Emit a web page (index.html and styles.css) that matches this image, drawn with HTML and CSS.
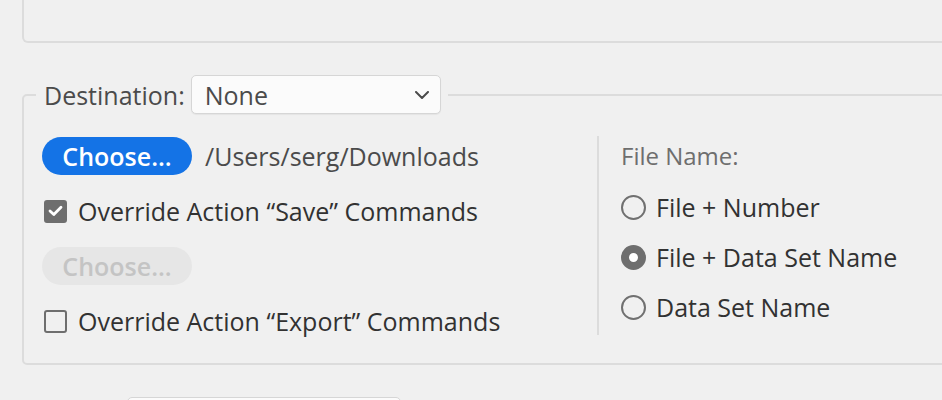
FILE: index.html
```html
<!DOCTYPE html>
<html>
<head>
<meta charset="utf-8">
<link rel="stylesheet" href="styles.css">
</head>
<body>
<div class="top-panel"></div>
<fieldset class="group">
  <legend class="legend">
    <span class="legend-label">Destination:</span>
    <span class="select">
      <span class="select-value">None</span>
      <svg class="chevron" width="14" height="8" viewBox="0 0 14 8"><path d="M1 1 L7 7 L13 1" fill="none" stroke="#4b4b4b" stroke-width="2" stroke-linecap="round" stroke-linejoin="round"/></svg>
    </span>
  </legend>
  <div class="columns">
    <div class="left">
      <div class="row">
        <button class="btn btn-primary">Choose...</button>
        <span class="path">/Users/serg/Downloads</span>
      </div>
      <div class="row">
        <span class="checkbox checked">
          <svg width="15" height="12" viewBox="0 0 15 12"><path d="M2 6 L5.8 9.6 L13 2.2" fill="none" stroke="#fff" stroke-width="2.8" stroke-linecap="round" stroke-linejoin="round"/></svg>
        </span>
        <span class="label">Override Action “Save” Commands</span>
      </div>
      <div class="row">
        <button class="btn btn-disabled">Choose...</button>
      </div>
      <div class="row">
        <span class="checkbox"></span>
        <span class="label">Override Action “Export” Commands</span>
      </div>
    </div>
    <div class="right">
      <div class="heading">File Name:</div>
      <div class="radios">
        <div class="radio-row"><span class="radio"></span><span class="label">File + Number</span></div>
        <div class="radio-row"><span class="radio selected"></span><span class="label">File + Data Set Name</span></div>
        <div class="radio-row"><span class="radio"></span><span class="label">Data Set Name</span></div>
      </div>
    </div>
  </div>
</fieldset>
<div class="bottom-row">
  <div class="bottom-box"></div>
</div>
</body>
</html>
```

FILE: styles.css
```css
* { box-sizing: border-box; }
html, body {
  margin: 0;
  padding: 0;
  background: #f0f0f0;
  overflow: hidden;
}
body {
  font-family: "Open Sans", "Noto Sans", sans-serif;
  color: #323232;
  width: 942px;
  height: 400px;
}
.top-panel {
  margin: -20px -20px 0 22px;
  height: 63px;
  border: 2px solid #dcdcdc;
  border-top: none;
  border-radius: 0 0 6px 6px;
}
.group {
  margin: 32px -20px 0 22px;
  padding: 23px 0 23px 18px;
  border: 2px solid #dcdcdc;
  border-radius: 5px;
  min-width: 0;
}
.legend {
  padding: 0 7px 0 8px;
  margin-left: -6px;
  display: flex;
  align-items: center;
  gap: 6px;
}
.legend-label {
  font-size: 25px;
  color: #4b4b4b;
}
.select {
  width: 250px;
  height: 39px;
  background: #fbfbfb;
  border: 1px solid #d6d6d6;
  border-radius: 5px;
  box-shadow: 0 1px 1px rgba(0,0,0,0.05);
  display: flex;
  align-items: center;
  justify-content: space-between;
  padding: 0 11px 0 13px;
}
.select-value {
  font-size: 25px;
  color: #4b4b4b;
}
.columns {
  display: flex;
  align-items: flex-start;
}
.left {
  width: 555px;
  display: flex;
  flex-direction: column;
  gap: 17px;
}
.row {
  height: 38px;
  display: flex;
  align-items: center;
}
.btn {
  width: 150px;
  height: 38px;
  border: none;
  border-radius: 19px;
  font-family: inherit;
  font-size: 25px;
  font-weight: 600;
  padding: 0;
}
.btn-primary {
  background: #1473e6;
  color: #fff;
}
.btn-disabled {
  background: #e6e6e6;
  color: #c4c4c4;
}
.path {
  margin-left: 13px;
  font-size: 25px;
  color: #4b4b4b;
}
.checkbox {
  width: 23px;
  height: 23px;
  margin-left: 2px;
  margin-right: 11px;
  border: 2px solid #6e6e6e;
  border-radius: 3px;
  display: flex;
  align-items: center;
  justify-content: center;
  flex: none;
}
.checkbox.checked {
  background: #6e6e6e;
}
.label {
  font-size: 25px;
  color: #323232;
}
.right {
  height: 199px;
  margin-top: -1px;
  border-left: 2px solid #dcdcdc;
  padding-left: 22px;
}
.heading {
  height: 38px;
  display: flex;
  align-items: center;
  font-size: 24px;
  color: #6e6e6e;
}
.radios {
  margin-top: 14px;
  display: flex;
  flex-direction: column;
  gap: 12px;
}
.radio-row {
  height: 38px;
  display: flex;
  align-items: center;
}
.radio {
  width: 25px;
  height: 25px;
  border: 2px solid #707070;
  border-radius: 50%;
  margin-right: 10px;
  flex: none;
}
.radio.selected {
  border: 8px solid #6e6e6e;
  background: #fff;
}
.bottom-row {
  padding: 32px 0 0 127px;
}
.bottom-box {
  width: 274px;
  height: 40px;
  background: #fbfbfb;
  border: 1px solid #d6d6d6;
  border-radius: 5px;
}
```
